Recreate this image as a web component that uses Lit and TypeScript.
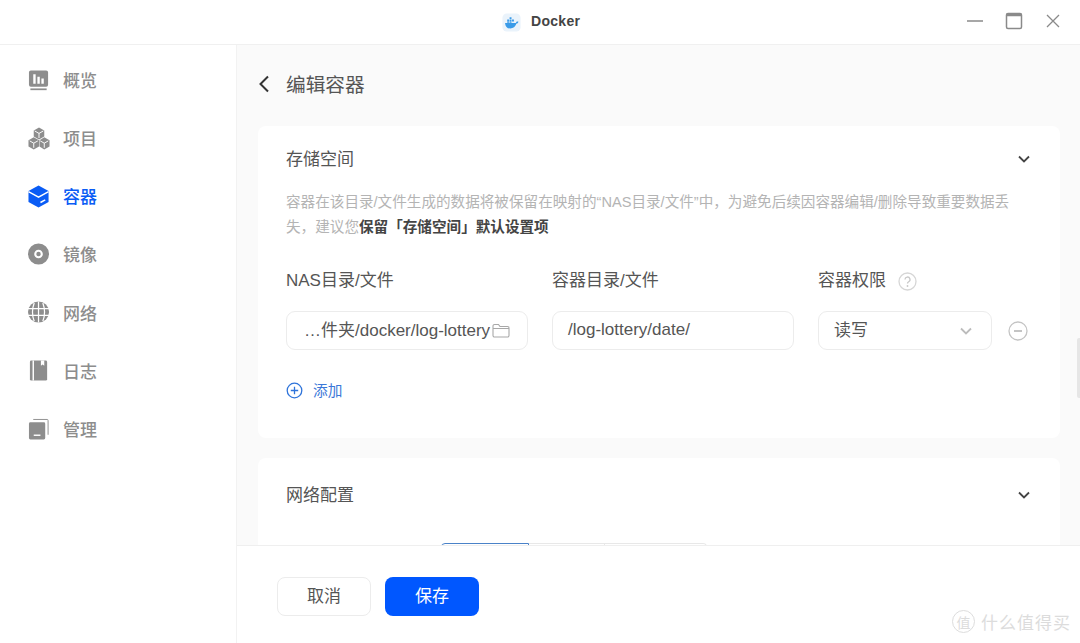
import { LitElement, html, css, svg } from "lit";
import { customElement } from "lit/decorators.js";

const icons: Record<string, unknown> = {
  overview: svg`<path fill-rule="evenodd" d="M3 1h16a2 2 0 0 1 2 2v13a2 2 0 0 1-2 2H3a2 2 0 0 1-2-2V3a2 2 0 0 1 2-2zM5.500 5v10h2.500V5zM9.800 7.500v7.500h2.500V7.500zM14 9.500v5.500h2.500V9.500z"/><rect x="2.500" y="19.800" width="17" height="1.800"/>`,
  project: svg`<path d="M11.500 0l5.500 3.100v6.300L11.500 12.500 6 9.400V3.100z"/><path d="M6 10.200l5.500 3.100v6.500L6 23 .5 19.800v-6.500z"/><path d="M17 10.200l5.500 3.100v6.500L17 23l-5-3.200v-6.500z"/><path d="M7 3.600l4.500 2.600 4.500-2.600M11.500 6.200v4.800M1.800 14l4.200 2.400 4.300-2.400M6 16.400v4.800M12.800 14l4.200 2.400 4.200-2.400M17 16.400v4.800" fill="none" stroke="#fff" stroke-width="1"/>`,
  container: svg`<path d="M11 0l10.500 5.700v11.600L11 23 .5 17.300V5.700z"/><path d="M.5 6.500L11 12.200 21.500 6.500" fill="none" stroke="#fff" stroke-width="1.500"/><path d="M13 17.800l5-2.700" stroke="#fff" stroke-width="1.600" fill="none"/>`,
  image: svg`<path fill-rule="evenodd" d="M11 0a11 11 0 1 1 0 22a11 11 0 0 1 0-22zM11 6.500a4.500 4.500 0 1 0 0 9a4.500 4.500 0 0 0 0-9z"/><circle cx="11" cy="11" r="2.300"/>`,
  network: svg`<circle cx="11" cy="11" r="11"/><path d="M0 7.500h22M0 14.500h22M11 0v22M6.500 1.500C4 8 4 14 6.500 20.500M15.500 1.500c2.500 6.500 2.500 12.500 0 19" fill="none" stroke="#fff" stroke-width="1.300"/>`,
  log: svg`<rect x="2" y="0" width="18" height="21" rx="1.500"/><path d="M5.500 0v21" stroke="#fff" stroke-width="1.500"/><path d="M13.500 0h3.500v5.500l-1.750-1.300-1.750 1.300z" fill="#fff"/>`,
  manage: svg`<rect x="1" y="4" width="17" height="18" rx="1.500"/><path d="M5.500 1h14.500a1 1 0 0 1 1 1v15" fill="none" stroke="currentColor" stroke-width="1"/><path d="M6 17.500h7" stroke="#fff" stroke-width="1.500"/>`,
};

const nav = [
  ["overview", "概览"],
  ["project", "项目"],
  ["container", "容器"],
  ["image", "镜像"],
  ["network", "网络"],
  ["log", "日志"],
  ["manage", "管理"],
];

const chevDown = html`<svg class="chev" viewBox="0 0 14 14"><path d="M2 4.500l5 5 5-5" fill="none" stroke="currentColor" stroke-width="1.800"/></svg>`;

@customElement("app-root")
export class AppRoot extends LitElement {
  static styles = css`
    :host {
      display: flex;
      flex-direction: column;
      width: 1080px;
      height: 643px;
      overflow: hidden;
      position: relative;
      background: #fff;
      font-family: "Liberation Sans", "Noto Sans CJK SC", sans-serif;
      color: #555;
      font-size: 17px;
    }
    .titlebar {
      height: 44px;
      flex: none;
      display: flex;
      align-items: center;
      border-bottom: 1px solid #f0f0f0;
      box-sizing: content-box;
      padding-left: 502px;
    }
    .logo { width: 19px; height: 19px; flex: none; }
    .app-name {
      margin-left: 10px;
      margin-top: -2px;
      font-size: 14px;
      font-weight: 700;
      color: #444;
      letter-spacing: 0.3px;
    }
    .win { margin-left: auto; margin-top: -2px; display: flex; align-items: center; gap: 21px; padding-right: 18px; color: #8a8a8a; }
    .win svg { width: 18px; height: 18px; display: block; }
    .body { flex: 1; min-height: 0; display: flex; }
    .side {
      width: 237px;
      flex: none;
      border-right: 1px solid #f2f2f2;
      padding-top: 6px;
      box-sizing: border-box;
      background: #fff;
    }
    .nav {
      height: 58.200px;
      display: flex;
      align-items: center;
      gap: 13px;
      padding-left: 28px;
      color: #8d8d8d;
      font-weight: 500;
    }
    .nav span { margin-top: -1.500px; }
    .nav svg { width: 22px; height: 23px; fill: currentColor; flex: none; }
    .nav.on { color: #0a5cf5; }
    .main { flex: 1; min-width: 0; display: flex; flex-direction: column; position: relative; background: #fff; }
    .scroll {
      flex: 1;
      min-height: 0;
      overflow: hidden;
      background: #fafafa;
      padding: 0 20px 0 21px;
    }
    .page-head {
      height: 81px;
      box-sizing: border-box;
      padding: 0 0 3px 0;
      display: flex;
      align-items: center;
      gap: 15px;
      font-size: 19.700px;
      color: #555;
    }
    .page-head svg { width: 14px; height: 20px; display: block; margin-left: -1px; }
    .page-head span { margin-top: -1px; }
    .card { background: #fff; border-radius: 8px; padding: 0 28px; margin-bottom: 20px; }
    .card-head {
      height: 66px;
      display: flex;
      align-items: center;
      justify-content: space-between;
      color: #555;
    }
    .card-head span { margin-top: -4px; }
    .chev { width: 14px; height: 14px; color: #444; display: block; }
    .card-head .chev { margin-right: 1px; }
    .desc { font-size: 14.600px; line-height: 25px; color: #b4b4b4; width: 730px; margin-top: -2px; }
    .desc b { color: #444; font-weight: 700; }
    .grid {
      display: grid;
      grid-template-columns: 242px 242px 174px 20px;
      column-gap: 24px;
      margin-top: 30px;
      align-items: center;
    }
    .lab { height: 22px; line-height: 22px; margin-bottom: 19px; color: #555; display: flex; align-items: center; gap: 12px; }
    .q { width: 19px; height: 19px; display: block; }
    .field {
      height: 39px;
      box-sizing: border-box;
      border: 1.500px solid #ececec;
      border-radius: 9px;
      display: flex;
      align-items: center;
      padding: 0 15px 2px;
      color: #555;
      white-space: nowrap;
      background: #fff;
    }
    .field.cjk { padding-bottom: 4px; }
    .field.path { padding: 0 15px 4px 17px; gap: 2px; }
    .field svg.folder { width: 18px; height: 15px; flex: none; margin-top: 4px; }
    .field .chev { margin-left: auto; color: #bcbcbc; margin-right: 3px; margin-top: 4px; }
    .minus { width: 20px; height: 20px; display: block; margin-left: -8px; }
    .add { display: flex; align-items: center; gap: 10px; margin-top: 30px; height: 20px; padding-bottom: 38px; font-size: 14.700px; color: #3b78d8; }
    .add svg { width: 17px; height: 17px; display: block; }
    .add span { margin-top: -1px; }
    .tabs { display: flex; margin-left: 155px; margin-top: 11px; height: 30px; }
    .tab { border: 1px solid #e8e8e8; height: 30px; box-sizing: border-box; border-left: 0; }
    .tab.a { width: 88px; border: 1px solid #4a82c8; border-radius: 4px 0 0 0; }
    .tab.b { width: 76px; }
    .tab.c { width: 102px; border-radius: 0 4px 0 0; }
    .foot {
      height: 98px;
      flex: none;
      box-sizing: border-box;
      border-top: 1px solid #efefef;
      background: #fff;
      display: flex;
      align-items: flex-start;
      gap: 14px;
      padding: 31px 0 0 40px;
    }
    .btn {
      width: 94px;
      height: 39px;
      box-sizing: border-box;
      border-radius: 8px;
      display: flex;
      align-items: center;
      justify-content: center;
      padding-bottom: 5px;
      border: 1.500px solid #ececec;
      color: #555;
      background: #fff;
    }
    .btn.primary { background: #0057ff; border: 0; color: #fff; }
    .thumb { position: absolute; right: 0; top: 338px; width: 3px; height: 60px; background: #e6e6e6; border-radius: 2px 0 0 2px; }
    .mark {
      position: absolute;
      left: 952px;
      top: 609px;
      display: flex;
      align-items: center;
      gap: 6px;
      font-size: 17px;
      color: #dcdcdc;
      letter-spacing: 1px;
    }
    .mark i {
      font-style: normal;
      width: 21px;
      height: 21px;
      border: 1px solid #ddd;
      border-radius: 50%;
      display: flex;
      align-items: center;
      justify-content: center;
      font-size: 14px;
      letter-spacing: 0;
    }
  `;

  render() {
    return html`
      <div class="titlebar">
        <svg class="logo" viewBox="0 0 22 22">
          <rect x="0.500" y="0.500" width="21" height="21" rx="5" fill="#eaf3fb"/>
          <path d="M3.500 11.500h12.500c.6-1.300 1.500-1.800 3-1.400-.3 1.300-1 2-2.200 2.200C15.500 16 13 18 9.500 18 5.800 18 3.800 15.500 3.500 11.500z" fill="#3a9be8"/>
          <path d="M6 7.500h2.200v2.200H6zM8.800 7.500H11v2.200H8.800zM11.600 7.500h2.200v2.200h-2.200zM8.800 4.800H11V7H8.800zM6 10h2.200v1.300H6zM8.800 10H11v1.300H8.800z" fill="#3a9be8"/>
        </svg>
        <span class="app-name">Docker</span>
        <div class="win">
          <svg viewBox="0 0 18 18"><path d="M1 9h16" stroke="currentColor" stroke-width="1.500"/></svg>
          <svg viewBox="0 0 18 18"><rect x="1.500" y="1.500" width="15" height="15" rx="1.500" fill="none" stroke="currentColor" stroke-width="1.500"/><path d="M1.500 3h15" stroke="currentColor" stroke-width="2.500"/></svg>
          <svg viewBox="0 0 18 18"><path d="M3 3l12 12M15 3L3 15" stroke="currentColor" stroke-width="1.300"/></svg>
        </div>
      </div>
      <div class="body">
        <nav class="side">
          ${nav.map(([k, t]) => html`<div class="nav ${k === "container" ? "on" : ""}"><svg viewBox="0 0 23 23">${icons[k]}</svg><span>${t}</span></div>`)}
        </nav>
        <div class="main">
          <div class="scroll">
            <div class="page-head">
              <svg viewBox="0 0 14 20"><path d="M11 2.500L3.500 10l7.500 7.500" fill="none" stroke="#333" stroke-width="2"/></svg>
              <span>编辑容器</span>
            </div>
            <section class="card">
              <div class="card-head"><span>存储空间</span>${chevDown}</div>
              <div class="desc">容器在该目录/文件生成的数据将被保留在映射的“NAS目录/文件”中，为避免后续因容器编辑/删除导致重要数据丢失，建议您<b>保留「存储空间」默认设置项</b></div>
              <div class="grid">
                <div class="lab">NAS目录/文件</div>
                <div class="lab">容器目录/文件</div>
                <div class="lab">容器权限
                  <svg class="q" viewBox="0 0 19 19"><circle cx="9.500" cy="9.500" r="8.500" fill="none" stroke="#d6d6d6" stroke-width="1.300"/><path d="M7 7.500a2.500 2.500 0 1 1 3.700 2.200c-.8.500-1.200.9-1.200 1.800" fill="none" stroke="#c8c8c8" stroke-width="1.300"/><circle cx="9.500" cy="14" r=".9" fill="#c8c8c8"/></svg>
                </div>
                <div class="lab"></div>
                <div class="field path"><span>…件夹/docker/log-lottery</span>
                  <svg class="folder" viewBox="0 0 18 15"><path d="M1 3a1.500 1.500 0 0 1 1.500-1.500h4l1.500 2h7.500A1.500 1.500 0 0 1 17 5v7.500a1.500 1.500 0 0 1-1.500 1.500h-13A1.500 1.500 0 0 1 1 12.500zM1 5.500h16" fill="none" stroke="#a8a8a8" stroke-width="1.100"/></svg>
                </div>
                <div class="field">/log-lottery/date/</div>
                <div class="field cjk"><span>读写</span>${chevDown}</div>
                <svg class="minus" viewBox="0 0 20 20"><circle cx="10" cy="10" r="9" fill="none" stroke="#c4c4c4" stroke-width="1.300"/><path d="M6 10h8" stroke="#b0b0b0" stroke-width="1.500"/></svg>
              </div>
              <div class="add">
                <svg viewBox="0 0 17 17"><circle cx="8.500" cy="8.500" r="7.300" fill="none" stroke="#2f74da" stroke-width="1.300"/><path d="M4.800 8.500h7.400M8.500 4.800v7.400" stroke="#2f74da" stroke-width="1.300"/></svg>
                <span>添加</span>
              </div>
            </section>
            <section class="card">
              <div class="card-head" style="height:74px"><span>网络配置</span>${chevDown}</div>
              <div class="tabs"><div class="tab a"></div><div class="tab b"></div><div class="tab c"></div></div>
            </section>
          </div>
          <div class="foot">
            <div class="btn">取消</div>
            <div class="btn primary">保存</div>
          </div>
        </div>
      </div>
      <div class="thumb"></div>
      <div class="mark"><i>值</i><span>什么值得买</span></div>
    `;
  }
}
